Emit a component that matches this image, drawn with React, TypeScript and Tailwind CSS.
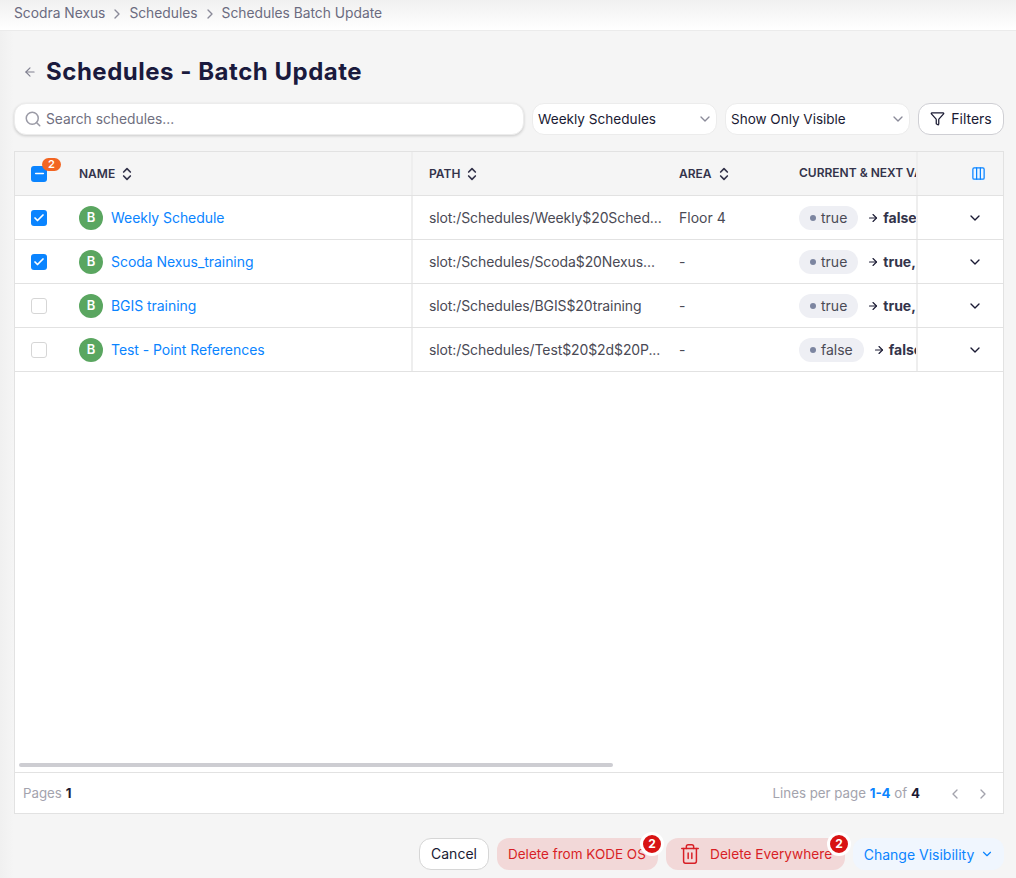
import React from 'react';
import { ArrowLeft, ArrowRight, ChevronDown, ChevronLeft, ChevronRight, ChevronsUpDown, Columns3, Funnel, Search, Trash2, Check, Minus } from 'lucide-react';

const rows = [
  { name: 'Weekly Schedule', path: 'slot:/Schedules/Weekly$20Sched...', area: 'Floor 4', current: 'true', next: 'false', checked: true },
  { name: 'Scoda Nexus_training', path: 'slot:/Schedules/Scoda$20Nexus...', area: '-', current: 'true', next: 'true,', checked: true },
  { name: 'BGIS training', path: 'slot:/Schedules/BGIS$20training', area: '-', current: 'true', next: 'true,', checked: false },
  { name: 'Test - Point References', path: 'slot:/Schedules/Test$20$2d$20P...', area: '-', current: 'false', next: 'false', checked: false },
];

function SortIcon() {
  return <ChevronsUpDown className="w-[16px] h-[16px] text-[#33334a]" strokeWidth={2.5} />;
}

function CountBadge() {
  return (
    <span className="absolute -top-[6px] -right-[6px] w-[24px] h-[24px] rounded-full bg-[#d81313] border-[3px] border-white text-white text-[12px] font-bold flex items-center justify-center">
      2
    </span>
  );
}

export default function App() {
  return (
    <div className="h-[878px] flex flex-col overflow-hidden bg-[#f5f5f5] text-[14px] text-[#1a1a33] font-['Inter',sans-serif]">
      {/* Breadcrumb */}
      <div className="h-[31px] shrink-0 flex items-center gap-[4px] px-[14px] pb-[3px] border-b border-[#ebebeb] bg-gradient-to-b from-[#f0f0f0] to-white text-[#6b6b80] text-[13.8px]">
        <span>Scodra Nexus</span>
        <ChevronRight className="w-[16px] h-[16px] text-[#8a8a99]" />
        <span>Schedules</span>
        <ChevronRight className="w-[16px] h-[16px] text-[#8a8a99]" />
        <span>Schedules Batch Update</span>
      </div>

      <div className="flex-1 min-h-0 flex flex-col px-[14px] pr-[12px] bg-[linear-gradient(to_right,#f0f0f0,#f5f5f5_14px)]">
        {/* Title */}
        <div className="h-[72px] shrink-0 flex items-center gap-[9px] pl-[9px] pt-[9px]">
          <ArrowLeft className="w-[14px] h-[14px] text-[#808090]" />
          <h1 className="text-[24px] font-bold text-[#1a1a3d] tracking-[0.52px]">Schedules - Batch Update</h1>
        </div>

        {/* Toolbar */}
        <div className="h-[32px] shrink-0 flex items-center gap-[8px]">
          <div className="w-[510px] h-full flex items-center gap-[4px] pl-[9px] bg-white rounded-[12px] border border-[#ececec] shadow-[0_1px_3px_rgba(0,0,0,0.18)]">
            <Search className="w-[18px] h-[18px] text-[#9b9ba6]" />
            <span className="pt-[1px] text-[#6f6f80] text-[13.8px]">Search schedules...</span>
          </div>
          <div className="w-[185px] h-full flex items-center justify-between pl-[5px] pr-[3px] bg-white rounded-[12px] border border-[#ececec]">
            <span className="text-[13.6px]">Weekly Schedules</span>
            <ChevronDown className="w-[16px] h-[16px] text-[#8a8a99]" />
          </div>
          <div className="w-[185px] h-full flex items-center justify-between pl-[5px] pr-[3px] bg-white rounded-[12px] border border-[#ececec]">
            <span className="text-[13.5px]">Show Only Visible</span>
            <ChevronDown className="w-[16px] h-[16px] text-[#8a8a99]" />
          </div>
          <button className="w-[86px] h-full flex items-center justify-center gap-[6px] pb-[1px] bg-white rounded-[12px] border border-[#cfcfd4]">
            <Funnel className="w-[15px] h-[15px]" />
            <span>Filters</span>
          </button>
        </div>

        {/* Table */}
        <div className="mt-[16px] h-[663px] shrink-0 flex flex-col bg-white border border-[#e2e2e2]">
          <div className="h-[44px] shrink-0 flex bg-[#f5f5f5] border-b border-[#e2e2e2] text-[12px] font-semibold text-[#33334a]">
            <div className="w-[398px] shrink-0 flex items-center border-r-[2px] border-[#eeeeee]">
              <div className="w-[64px] pl-[16px]">
                <span className="relative w-[16px] h-[16px] rounded-[3px] bg-[#0a84ff] flex items-center justify-center">
                  <Minus className="w-[13px] h-[13px] text-white" strokeWidth={3} />
                  <span className="absolute -top-[8px] -right-[14px] w-[19px] h-[13px] rounded-full bg-[#f26522] text-white text-[11px] leading-[13px] font-semibold text-center">2</span>
                </span>
              </div>
              <span className="flex items-center gap-[4px]">NAME <SortIcon /></span>
            </div>
            <div className="flex-1 min-w-0 flex items-center overflow-hidden whitespace-nowrap">
              <div className="w-[250px] shrink-0 pl-[16px] flex items-center gap-[4px]">PATH <SortIcon /></div>
              <div className="w-[120px] shrink-0 pl-[16px] flex items-center gap-[4px]">AREA <SortIcon /></div>
              <div className="shrink-0 pl-[16px] pb-[2px]">CURRENT &amp; NEXT VALUES</div>
            </div>
            <div className="w-[87px] shrink-0 flex items-center justify-end pr-[17px] border-l-[2px] border-[#eeeeee]">
              <span className="w-[16px] h-[16px] flex items-center justify-center rounded-full bg-[#eef6ff]">
                <Columns3 className="w-[15px] h-[15px] text-[#0a84ff]" />
              </span>
            </div>
          </div>

          {rows.map((row) => (
            <div key={row.name} className="h-[44px] shrink-0 flex border-b border-[#e2e2e2]">
              <div className="w-[398px] shrink-0 flex items-center border-r-[2px] border-[#eeeeee]">
                <div className="w-[64px] pl-[16px]">
                  {row.checked ? (
                    <span className="w-[16px] h-[16px] rounded-[3px] bg-[#0a84ff] flex items-center justify-center">
                      <Check className="w-[12px] h-[12px] text-white" strokeWidth={3.5} />
                    </span>
                  ) : (
                    <span className="block w-[16px] h-[16px] rounded-[3px] border border-[#d6d6d6] bg-white" />
                  )}
                </div>
                <span className="w-[24px] h-[24px] rounded-full bg-[#5aa660] text-white text-[13px] font-semibold flex items-center justify-center">B</span>
                <span className="ml-[8px] text-[#0a84ff] tracking-[-0.05px]">{row.name}</span>
              </div>
              <div className="flex-1 min-w-0 flex items-center overflow-hidden whitespace-nowrap text-[#4a4a55]">
                <div className="w-[250px] shrink-0 pl-[16px] tracking-[-0.1px]">{row.path}</div>
                <div className="w-[120px] shrink-0 pl-[16px]">{row.area}</div>
                <div className="shrink-0 pl-[16px] flex items-center">
                  <span className="h-[24px] px-[11px] rounded-full bg-[#eeeff4] flex items-center gap-[5px]">
                    <span className="w-[6px] h-[6px] rounded-full bg-[#7c85a0]" />
                    {row.current}
                  </span>
                  <ArrowRight className="ml-[9px] w-[12px] h-[12px] text-[#1a1a33]" strokeWidth={2.25} />
                  <span className="ml-[4px] font-bold text-[#33334a]">{row.next}</span>
                </div>
              </div>
              <div className="w-[87px] shrink-0 flex items-center justify-end pr-[20px] border-l-[2px] border-[#eeeeee]">
                <ChevronDown className="w-[16px] h-[16px] text-[#1a1a33]" />
              </div>
            </div>
          ))}

          <div className="flex-1 min-h-0 flex flex-col justify-end px-[4px] pb-[5px]">
            <div className="w-[594px] h-[4px] rounded-full bg-[#cdcdd2]" />
          </div>

          {/* Pagination */}
          <div className="h-[41px] shrink-0 flex items-center justify-between pl-[8px] pr-[12px] pt-[1px] border-t border-[#e2e2e2] text-[13.3px] text-[#a3a3ad]">
            <span>Pages <b className="text-[#1a1a33]">1</b></span>
            <div className="flex items-center">
              <span>Lines per page <b className="text-[#0a84ff]">1-4</b> of <b className="text-[#1a1a33]">4</b></span>
              <ChevronLeft className="ml-[27px] w-[16px] h-[16px] text-[#a3a3ad]" />
              <ChevronRight className="ml-[12px] w-[16px] h-[16px] text-[#a3a3ad]" />
            </div>
          </div>
        </div>

        {/* Actions */}
        <div className="mt-[24px] h-[32px] shrink-0 flex items-center justify-end gap-[8px]">
          <button className="w-[70px] h-full pb-[1px] bg-white rounded-[12px] border border-[#d6d6d6]">Cancel</button>
          <button className="relative w-[161px] h-[32px] rounded-[12px] bg-[#f2d8d8] text-[#d81f26] text-[13.5px] text-left pl-[11px]">
            Delete from KODE OS
            <CountBadge />
          </button>
          <button className="relative w-[179px] h-[32px] rounded-[12px] bg-[#f2d8d8] text-[#d81f26] text-[13.7px] flex items-center gap-[9px] pl-[13px]">
            <Trash2 className="w-[22px] h-[22px]" strokeWidth={1.6} />
            Delete Everywhere
            <CountBadge />
          </button>
          <button className="w-[151px] h-[32px] pl-[1px] rounded-[12px] bg-[#f0f6fe] text-[#0a84ff] text-[14px] flex items-center justify-center gap-[6px]">
            Change Visibility
            <ChevronDown className="w-[14px] h-[14px]" />
          </button>
        </div>
      </div>
    </div>
  );
}
